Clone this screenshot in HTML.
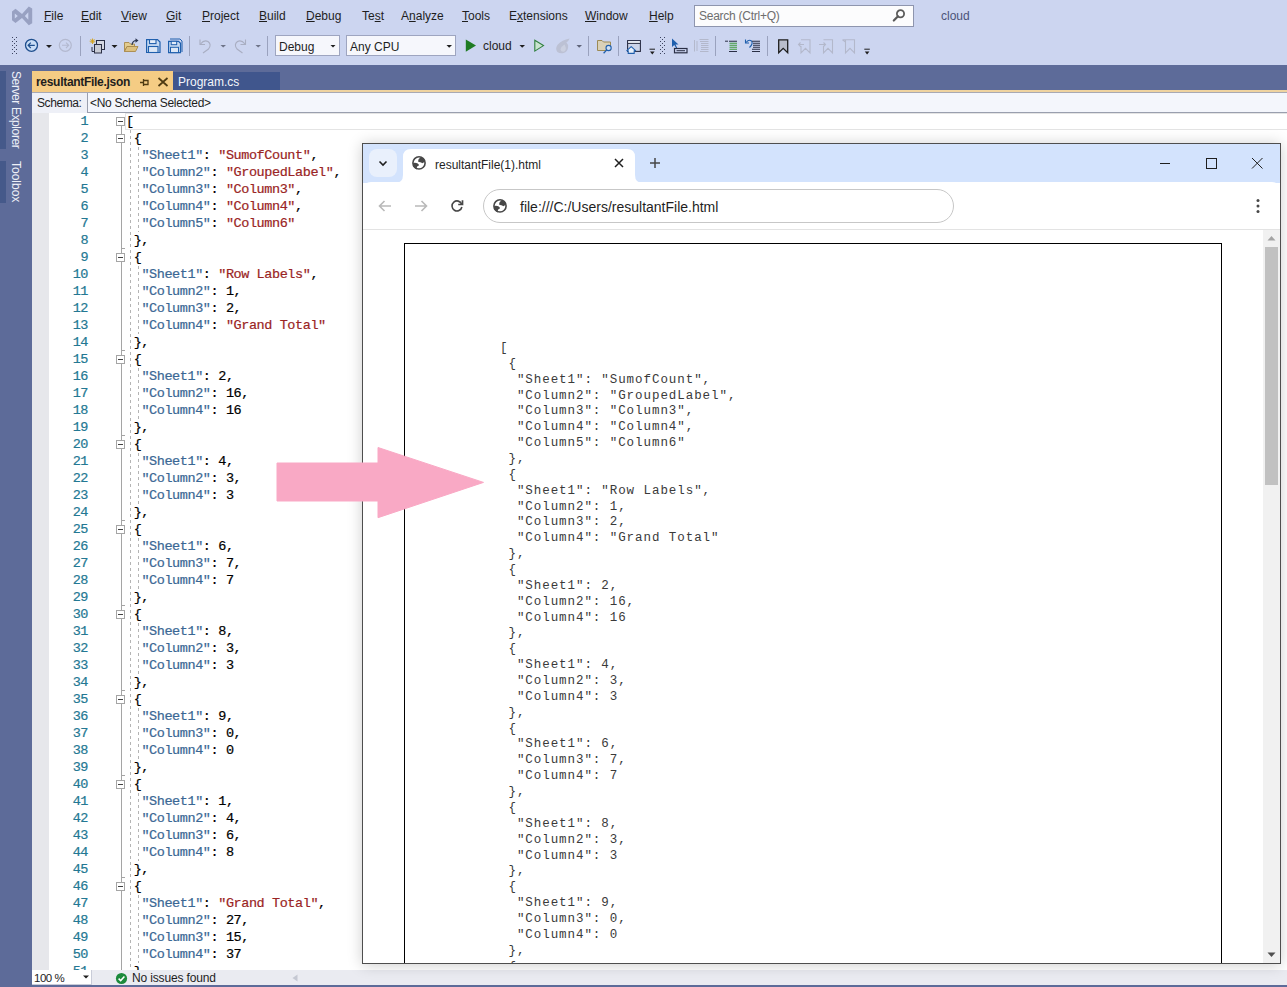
<!DOCTYPE html>
<html><head><meta charset="utf-8">
<style>
*{margin:0;padding:0;box-sizing:border-box}
html,body{width:1287px;height:987px;overflow:hidden}
body{position:relative;background:#CCD5F0;font-family:"Liberation Sans",sans-serif;font-size:12px;color:#1E1E1E}
.a{position:absolute}
/* menu */
.menu{position:absolute;top:9px;font-size:12px;color:#1E1E1E;white-space:nowrap}
.menu u{text-decoration:underline;text-underline-offset:1px}
/* env */
#env{position:absolute;left:0;top:65px;width:1287px;height:922px;background:#5D6B99}
#editor{position:absolute;left:32px;top:113px;width:1255px;height:857px;background:#fff}
.ln{position:absolute;left:48px;width:40px;text-align:right;height:17px;line-height:17px;font-family:"Liberation Mono",monospace;font-size:13.5px;color:#237893;letter-spacing:-0.48px;-webkit-text-stroke:0.2px currentColor}
.cl{position:absolute;left:126px;height:17px;line-height:17px;font-family:"Liberation Mono",monospace;font-size:13.5px;letter-spacing:-0.42px;white-space:pre;color:#000;-webkit-text-stroke:0.2px currentColor}
.k{color:#3A6794}.s{color:#9A2424}.n{color:#000}.p{color:#000}
/* browser */
#br{position:absolute;left:362px;top:143px;width:919px;height:821px;background:#fff;border:1px solid #4E4E4E;box-shadow:0 1px 14px rgba(0,0,0,0.2);overflow:hidden}
#brtabs{position:absolute;left:0;top:0;width:917px;height:39px;background:#D3E3FD}
#brpage pre{font-family:"Liberation Mono",monospace;font-size:14px;line-height:15.86px;color:#000}
</style></head>
<body>
<!-- VS logo -->
<svg class="a" style="left:0;top:0" width="40" height="30" viewBox="0 0 40 30">
 <path d="M12 11.5 L15.5 8.8 L22 14 L28.8 6.5 L32.2 8.5 V23.3 L28.8 25.3 L22 18 L15.5 23 L12 20.3 Z M14.8 13.6 L17.8 16 L14.8 18.4 Z M28.3 12.3 V19.7 L24.9 16 Z" fill="#98A1C2" fill-rule="evenodd"/>
</svg>
<div class="menu" style="left:44px"><u>F</u>ile</div>
<div class="menu" style="left:81px"><u>E</u>dit</div>
<div class="menu" style="left:121px"><u>V</u>iew</div>
<div class="menu" style="left:166px"><u>G</u>it</div>
<div class="menu" style="left:202px"><u>P</u>roject</div>
<div class="menu" style="left:259px"><u>B</u>uild</div>
<div class="menu" style="left:306px"><u>D</u>ebug</div>
<div class="menu" style="left:362px">Te<u>s</u>t</div>
<div class="menu" style="left:401px">A<u>n</u>alyze</div>
<div class="menu" style="left:462px"><u>T</u>ools</div>
<div class="menu" style="left:509px">E<u>x</u>tensions</div>
<div class="menu" style="left:585px"><u>W</u>indow</div>
<div class="menu" style="left:649px"><u>H</u>elp</div>
<div class="a" style="left:694px;top:5px;width:220px;height:22px;background:#FCFCFD;border:1px solid #8E95AE"></div>
<div class="a" style="left:699px;top:9px;font-size:12px;letter-spacing:-0.25px;color:#6E6E6E">Search (Ctrl+Q)</div>
<svg class="a" style="left:890px;top:7px" width="18" height="18" viewBox="0 0 18 18"><circle cx="10.5" cy="6.8" r="3.6" fill="none" stroke="#5A5A5A" stroke-width="1.8"/><path d="M8 9.3 L3.8 13.5" stroke="#5A5A5A" stroke-width="2.2" stroke-linecap="round"/></svg>
<div class="a" style="left:941px;top:9px;font-size:12px;color:#4B5378">cloud</div>

<!-- toolbar -->
<div id="toolbar"><!-- combos -->
<div class="a" style="left:275px;top:35px;width:65px;height:21px;background:#F6F7FC;border:1px solid #9EA5C0"></div>
<div class="a" style="left:279px;top:40px;font-size:12px;color:#1E1E1E">Debug</div>
<div class="a" style="left:346px;top:35px;width:110px;height:21px;background:#F6F7FC;border:1px solid #9EA5C0"></div>
<div class="a" style="left:350px;top:40px;font-size:12px;color:#1E1E1E">Any CPU</div>
<div class="a" style="left:483px;top:39px;font-size:12px;color:#1E1E1E">cloud</div>
<svg class="a" style="left:0;top:30px" width="900" height="30" viewBox="0 30 900 30">
<defs>
 <pattern id="grip" x="0" y="0" width="4" height="4" patternUnits="userSpaceOnUse"><rect x="0" y="1" width="1" height="1" fill="#3D4460"/><rect x="2" y="3" width="1" height="1" fill="#3D4460"/></pattern>
</defs>
<!-- grip -->
<rect x="12" y="37" width="5" height="17" fill="url(#grip)"/>
<!-- back -->
<circle cx="31.5" cy="45.3" r="6" fill="#C9DDF6" stroke="#1F4F8E" stroke-width="1.3"/>
<path d="M34.8 45.3 H28.3 M30.8 42.6 L28.1 45.3 L30.8 48" fill="none" stroke="#1F4F8E" stroke-width="1.2"/>
<path d="M46 45 H52 L49 48 Z" fill="#1E1E1E"/>
<!-- forward gray -->
<circle cx="65.3" cy="45.3" r="6" fill="none" stroke="#B3B9CF" stroke-width="1.2"/>
<path d="M62 45.3 H68.5 M66 42.6 L68.7 45.3 L66 48" fill="none" stroke="#B3B9CF" stroke-width="1.1"/>
<rect x="80" y="36" width="1" height="20" fill="#9AA2BE"/>
<!-- new project -->
<path d="M92.5 38.5 V44 M89.7 41.2 H95.3 M90.5 39.2 L94.5 43.2 M94.5 39.2 L90.5 43.2" stroke="#D4A216" stroke-width="0.9"/>
<rect x="96.5" y="40.5" width="8" height="9" fill="#D6D9E3" stroke="#2A2F45" stroke-width="1"/>
<rect x="94.5" y="44.5" width="7" height="8.5" fill="#C9CCD6" stroke="#2A2F45" stroke-width="1"/>
<path d="M92 47 V51.5 H94" fill="none" stroke="#2A2F45" stroke-width="1"/>
<path d="M111.5 45 H117.5 L114.5 48 Z" fill="#1E1E1E"/>
<!-- open folder -->
<path d="M124.5 42.5 H129 L130.5 44 H134.5 V46.5 H127 L124.5 51.5 Z" fill="#E3CC8F" stroke="#A8894A" stroke-width="0.9"/>
<path d="M124.5 51.5 L127 46.5 H138 L135.5 51.5 Z" fill="#DCC080" stroke="#A8894A" stroke-width="0.9"/>
<path d="M132 45 Q132.5 40.5 136.5 40.5" fill="none" stroke="#2B3550" stroke-width="1.2"/>
<path d="M135.5 38.3 L138.5 40.5 L135.5 42.7 Z" fill="#2B3550"/>
<!-- save -->
<path d="M146.6 39.6 H157.5 L160 42 V52.5 H146.6 Z" fill="#C7DAF2" stroke="#1F5FAD" stroke-width="1.2"/>
<rect x="149.5" y="39.6" width="6.5" height="4" fill="#E4EDF9" stroke="#1F5FAD" stroke-width="1.1"/>
<rect x="148.5" y="46.5" width="9.5" height="6" fill="#DCE7F6" stroke="#1F5FAD" stroke-width="1.1"/>
<!-- save all -->
<path d="M170 39 H180 L182 41 V52" fill="none" stroke="#1F5FAD" stroke-width="1"/>
<path d="M168.6 41.3 H178.5 L180.5 43.3 V52.6 H168.6 Z" fill="#C7DAF2" stroke="#1F5FAD" stroke-width="1.2"/>
<rect x="171.2" y="41.3" width="5.5" height="3.4" fill="#E4EDF9" stroke="#1F5FAD" stroke-width="1"/>
<rect x="170.5" y="47.3" width="8" height="5.3" fill="#DCE7F6" stroke="#1F5FAD" stroke-width="1"/>
<rect x="189" y="36" width="1" height="20" fill="#9AA2BE"/>
<!-- undo -->
<path d="M200 39.5 V44.5 H205" fill="none" stroke="#A9AEC2" stroke-width="1.1"/>
<path d="M200.5 44 Q204 39.5 208 41.5 Q212 44.5 208.5 49 L203 53" fill="none" stroke="#A9AEC2" stroke-width="1.1"/>
<path d="M220.5 45 H226 L223.2 47.6 Z" fill="#6E7488"/>
<!-- redo -->
<path d="M245.5 39.5 V44.5 H240.5" fill="none" stroke="#A9AEC2" stroke-width="1.1"/>
<path d="M245 44 Q241.5 39.5 237.5 41.5 Q233.5 44.5 237 49 L242.5 53" fill="none" stroke="#A9AEC2" stroke-width="1.1"/>
<path d="M255.5 45 H261 L258.2 47.6 Z" fill="#6E7488"/>
<rect x="267" y="36" width="1" height="20" fill="#9AA2BE"/>
<!-- combos arrows -->
<path d="M330.5 45 H335.5 L333 47.5 Z" fill="#1E1E1E"/>
<path d="M446.5 45 H452 L449.2 47.7 Z" fill="#1E1E1E"/>
<!-- play -->
<path d="M465.8 39.6 L476 45.6 L465.8 51.7 Z" fill="#1E7B22"/>
<path d="M519.5 45 H525 L522.2 47.8 Z" fill="#1E1E1E"/>
<path d="M534.8 40.2 L543.5 45.6 L534.8 51.1 Z" fill="#C9E4CF" stroke="#2F7F3E" stroke-width="1.1"/>
<!-- flame -->
<path d="M569.6 38.4 Q562 39.8 557.6 44.8 Q554.8 48.8 557.4 51.9 Q560 54 563.6 53.1 Q567.6 51.8 568.1 47.6 Q568.4 44.2 566.4 42.6 Q568.6 41 569.6 38.4 Z" fill="#BCC1D4"/>
<path d="M564.5 44.5 Q561 46.5 560.5 49.5 Q561 52 563.5 51.8 Q566 51 565.8 48 Q565.5 46 564.5 44.5 Z" fill="#CBD0E0"/>
<path d="M576.5 45 H582 L579.2 47.7 Z" fill="#5E6479"/>
<rect x="588" y="36" width="1" height="20" fill="#9AA2BE"/>
<!-- folder search -->
<path d="M597.5 40.5 H602 L603.5 42 H610.5 V50.5 H597.5 Z" fill="#D9D1B8" stroke="#9C8A55" stroke-width="1"/>
<circle cx="608.6" cy="48" r="2.6" fill="#CFE0F5" stroke="#1F5FAD" stroke-width="1.1"/>
<path d="M606.8 49.9 L603.6 53.2" stroke="#1F5FAD" stroke-width="1.3"/>
<rect x="618" y="36" width="1" height="20" fill="#9AA2BE"/>
<!-- window home -->
<rect x="627.6" y="40.6" width="12.8" height="10.8" fill="#CDD5EA" stroke="#2A2F45" stroke-width="1.1"/>
<rect x="628.2" y="41.2" width="11.6" height="2" fill="#F2F4FA"/>
<path d="M627.6 43.4 H640.4" stroke="#2A2F45" stroke-width="1"/>
<path d="M626.8 50.6 L631.2 46.6 L635.6 50.6 H634.2 V53.4 H628.2 V50.6 Z" fill="#E8F0FB" stroke="#1F5FAD" stroke-width="1.1" stroke-linejoin="round"/>
<path d="M649.5 49.2 H655" stroke="#1E1E1E" stroke-width="1"/>
<path d="M650 51.6 H654.6 L652.3 54.4 Z" fill="#1E1E1E"/>
<rect x="660" y="36.5" width="5" height="17.5" fill="url(#grip)"/>
<!-- cursor rect -->
<path d="M672 38.5 V47 L674.3 45 L676.3 48.5 L677.3 48 L675.5 44.5 H678.5 Z" fill="#1F5FAD"/>
<rect x="674.5" y="48.5" width="12.5" height="4.3" fill="none" stroke="#2A2F45" stroke-width="1.2"/>
<rect x="676.5" y="50.2" width="8.5" height="1" fill="#2A2F45"/>
<!-- gray columns -->
<path d="M694.5 40 V51.5 M697 41 V51" stroke="#B3B8CB" stroke-width="1"/>
<path d="M699.5 39.5 H708.5 M700 41.5 H708.5 M701 43.5 H708.5 M701 45.5 H708.5 M701 47.5 H708.5 M701 49.5 H708.5 M700 51.5 H708.5" stroke="#B3B8CB" stroke-width="1"/>
<rect x="715" y="36" width="1" height="20" fill="#9AA2BE"/>
<!-- indent -->
<path d="M725 41.2 H728" stroke="#2A2F45" stroke-width="1"/>
<path d="M729 41.2 H737 M729 51.5 H737" stroke="#2A2F45" stroke-width="1.1"/>
<path d="M729.5 43.3 H737 M729.5 45.3 H737 M729.5 47.3 H737 M729.5 49.3 H737" stroke="#3F9A3F" stroke-width="1.1"/>
<!-- undo lines -->
<path d="M745.5 39.5 V43 H749" fill="none" stroke="#1F5FAD" stroke-width="1.1"/>
<path d="M746 42.5 Q749 39 751.5 41 Q753.5 43.5 749.5 47.5" fill="none" stroke="#1F5FAD" stroke-width="1.1"/>
<path d="M752 41.3 H760 M753 43.3 H760 M753 45.3 H760 M753 47.3 H760 M752 49.3 H760 M752 51.5 H760" stroke="#2A2F45" stroke-width="1.1"/>
<rect x="767" y="36" width="1" height="20" fill="#9AA2BE"/>
<!-- bookmarks -->
<path d="M778.7 39.8 H787.7 V52.8 L783.2 48.3 L778.7 52.8 Z" fill="#B9BDCB" stroke="#1E1E1E" stroke-width="1.3" stroke-linejoin="miter"/>
<path d="M801 39.8 H810 V52.8 L805.5 48.3 L801 52.8 V46 M798.5 44.5 H804 M800.5 42.5 L798.5 44.5 L800.5 46.5" fill="none" stroke="#B3B8CB" stroke-width="1.1"/>
<path d="M823.5 39.8 H832.5 V52.8 L828 48.3 L823.5 52.8 V46 M819 44.5 H825.5 M823.5 42.5 L825.5 44.5 L823.5 46.5" fill="none" stroke="#B3B8CB" stroke-width="1.1"/>
<path d="M842.5 39.8 H854.5 M845.5 39.8 H854.5 V52.8 L850 48.3 L845.5 52.8 V39.8 M842.5 39.8 L845.5 42" fill="none" stroke="#B3B8CB" stroke-width="1.1"/>
<path d="M864.3 49.2 H869.8" stroke="#1E1E1E" stroke-width="1"/>
<path d="M864.8 51.6 H869.4 L867.1 54.4 Z" fill="#1E1E1E"/>
</svg>
</div>

<div id="env"></div>
<!-- left autohide -->
<div class="a" style="left:0;top:71px;width:6px;height:78px;background:#45598A"></div>
<div class="a" style="left:0;top:161px;width:6px;height:42px;background:#45598A"></div>

<!-- doc tabs -->
<div class="a" style="left:32px;top:71px;width:141px;height:22px;background:#F5CC84"></div>
<div class="a" style="left:36px;top:75px;font-weight:bold;font-size:12px;letter-spacing:-0.3px;color:#1E1E1E">resultantFile.json</div>
<svg class="a" style="left:138px;top:77px" width="12" height="11" viewBox="0 0 12 11"><path d="M2 5.5 H5.5 M5.5 2 V9 M5.5 3.5 H10 V7.5 H5.5" fill="none" stroke="#4F3A12" stroke-width="1.3"/></svg>
<svg class="a" style="left:156px;top:76px" width="14" height="12" viewBox="0 0 14 12"><path d="M2.5 2 L11.5 10 M11.5 2 L2.5 10" stroke="#4F3A12" stroke-width="1.7"/></svg>
<div class="a" style="left:173px;top:72px;width:107px;height:18px;background:#40568D"></div>
<div class="a" style="left:178px;top:75px;font-size:12px;color:#F4F6FC">Program.cs</div>
<div class="a" style="left:173px;top:90px;width:1114px;height:2px;background:#EFD3A0"></div>
<div class="a" style="left:32px;top:92px;width:1255px;height:1px;background:#A8A9B4"></div>
<!-- left sidebar text -->
<div class="a" style="left:23px;top:71px;width:80px;height:14px;transform-origin:0 0;transform:rotate(90deg);font-size:12px;color:#EEF0F8;white-space:nowrap;letter-spacing:-0.4px;line-height:14px;text-align:left">Server Explorer</div>
<div class="a" style="left:23px;top:161px;width:50px;height:14px;transform-origin:0 0;transform:rotate(90deg);font-size:12px;color:#EEF0F8;white-space:nowrap;line-height:14px;text-align:left">Toolbox</div>
<!-- schema bar -->
<div class="a" style="left:32px;top:93px;width:1255px;height:20px;background:#EEF0F7"></div>
<div class="a" style="left:37px;top:96px;font-size:12px;letter-spacing:-0.4px;color:#1E1E1E">Schema:</div>
<div class="a" style="left:87px;top:93px;width:1200px;height:20px;background:#F4F6FC;border:1px solid #9A9FAE;border-top:none;border-right:none"></div>
<div class="a" style="left:90px;top:96px;font-size:12px;letter-spacing:-0.3px;color:#1E1E1E">&lt;No Schema Selected&gt;</div>

<div id="editor"></div>
<div class="a" style="left:32px;top:113px;width:17px;height:857px;background:#E6E7EB"></div>
<div class="a" style="left:121px;top:126px;width:1px;height:844px;background:#A5A5A5"></div>
<div class="a" style="left:121px;top:248px;width:4px;height:1px;background:#A5A5A5"></div>
<div class="a" style="left:121px;top:350px;width:4px;height:1px;background:#A5A5A5"></div>
<div class="a" style="left:121px;top:435px;width:4px;height:1px;background:#A5A5A5"></div>
<div class="a" style="left:121px;top:520px;width:4px;height:1px;background:#A5A5A5"></div>
<div class="a" style="left:121px;top:605px;width:4px;height:1px;background:#A5A5A5"></div>
<div class="a" style="left:121px;top:690px;width:4px;height:1px;background:#A5A5A5"></div>
<div class="a" style="left:121px;top:775px;width:4px;height:1px;background:#A5A5A5"></div>
<div class="a" style="left:121px;top:877px;width:4px;height:1px;background:#A5A5A5"></div>
<div class="a" style="left:121px;top:979px;width:4px;height:1px;background:#A5A5A5"></div>
<div class="a" style="left:116px;top:117px;width:9px;height:9px;background:#fff;border:1px solid #A5A5A5"><div class="a" style="left:1px;top:3px;width:5px;height:1px;background:#424242"></div></div>
<div class="a" style="left:116px;top:134px;width:9px;height:9px;background:#fff;border:1px solid #A5A5A5"><div class="a" style="left:1px;top:3px;width:5px;height:1px;background:#424242"></div></div>
<div class="a" style="left:116px;top:253px;width:9px;height:9px;background:#fff;border:1px solid #A5A5A5"><div class="a" style="left:1px;top:3px;width:5px;height:1px;background:#424242"></div></div>
<div class="a" style="left:116px;top:355px;width:9px;height:9px;background:#fff;border:1px solid #A5A5A5"><div class="a" style="left:1px;top:3px;width:5px;height:1px;background:#424242"></div></div>
<div class="a" style="left:116px;top:440px;width:9px;height:9px;background:#fff;border:1px solid #A5A5A5"><div class="a" style="left:1px;top:3px;width:5px;height:1px;background:#424242"></div></div>
<div class="a" style="left:116px;top:525px;width:9px;height:9px;background:#fff;border:1px solid #A5A5A5"><div class="a" style="left:1px;top:3px;width:5px;height:1px;background:#424242"></div></div>
<div class="a" style="left:116px;top:610px;width:9px;height:9px;background:#fff;border:1px solid #A5A5A5"><div class="a" style="left:1px;top:3px;width:5px;height:1px;background:#424242"></div></div>
<div class="a" style="left:116px;top:695px;width:9px;height:9px;background:#fff;border:1px solid #A5A5A5"><div class="a" style="left:1px;top:3px;width:5px;height:1px;background:#424242"></div></div>
<div class="a" style="left:116px;top:780px;width:9px;height:9px;background:#fff;border:1px solid #A5A5A5"><div class="a" style="left:1px;top:3px;width:5px;height:1px;background:#424242"></div></div>
<div class="a" style="left:116px;top:882px;width:9px;height:9px;background:#fff;border:1px solid #A5A5A5"><div class="a" style="left:1px;top:3px;width:5px;height:1px;background:#424242"></div></div>
<div class="a" style="left:130px;top:130px;width:1px;height:840px;background:repeating-linear-gradient(#B4B4B4 0 3px,transparent 3px 6px)"></div>
<div class="a" style="left:138px;top:147px;width:1px;height:85px;background:repeating-linear-gradient(#B4B4B4 0 3px,transparent 3px 6px)"></div>
<div class="a" style="left:138px;top:266px;width:1px;height:68px;background:repeating-linear-gradient(#B4B4B4 0 3px,transparent 3px 6px)"></div>
<div class="a" style="left:138px;top:368px;width:1px;height:51px;background:repeating-linear-gradient(#B4B4B4 0 3px,transparent 3px 6px)"></div>
<div class="a" style="left:138px;top:453px;width:1px;height:51px;background:repeating-linear-gradient(#B4B4B4 0 3px,transparent 3px 6px)"></div>
<div class="a" style="left:138px;top:538px;width:1px;height:51px;background:repeating-linear-gradient(#B4B4B4 0 3px,transparent 3px 6px)"></div>
<div class="a" style="left:138px;top:623px;width:1px;height:51px;background:repeating-linear-gradient(#B4B4B4 0 3px,transparent 3px 6px)"></div>
<div class="a" style="left:138px;top:708px;width:1px;height:51px;background:repeating-linear-gradient(#B4B4B4 0 3px,transparent 3px 6px)"></div>
<div class="a" style="left:138px;top:793px;width:1px;height:68px;background:repeating-linear-gradient(#B4B4B4 0 3px,transparent 3px 6px)"></div>
<div class="a" style="left:138px;top:895px;width:1px;height:68px;background:repeating-linear-gradient(#B4B4B4 0 3px,transparent 3px 6px)"></div>
<div class="a" style="left:125px;top:113px;width:1162px;height:17px;border:1px solid #E4E4E4;border-right:none"></div>
<div class="ln" style="top:113px">1</div>
<div class="cl" style="top:113px"><span class="p">[</span></div>
<div class="ln" style="top:130px">2</div>
<div class="cl" style="top:130px">&nbsp;<span class="p">{</span></div>
<div class="ln" style="top:147px">3</div>
<div class="cl" style="top:147px">&nbsp;&nbsp;<span class="k">&quot;Sheet1&quot;</span><span class="p">:</span> <span class="s">&quot;SumofCount&quot;</span><span class="p">,</span></div>
<div class="ln" style="top:164px">4</div>
<div class="cl" style="top:164px">&nbsp;&nbsp;<span class="k">&quot;Column2&quot;</span><span class="p">:</span> <span class="s">&quot;GroupedLabel&quot;</span><span class="p">,</span></div>
<div class="ln" style="top:181px">5</div>
<div class="cl" style="top:181px">&nbsp;&nbsp;<span class="k">&quot;Column3&quot;</span><span class="p">:</span> <span class="s">&quot;Column3&quot;</span><span class="p">,</span></div>
<div class="ln" style="top:198px">6</div>
<div class="cl" style="top:198px">&nbsp;&nbsp;<span class="k">&quot;Column4&quot;</span><span class="p">:</span> <span class="s">&quot;Column4&quot;</span><span class="p">,</span></div>
<div class="ln" style="top:215px">7</div>
<div class="cl" style="top:215px">&nbsp;&nbsp;<span class="k">&quot;Column5&quot;</span><span class="p">:</span> <span class="s">&quot;Column6&quot;</span><span class="p"></span></div>
<div class="ln" style="top:232px">8</div>
<div class="cl" style="top:232px">&nbsp;<span class="p">},</span></div>
<div class="ln" style="top:249px">9</div>
<div class="cl" style="top:249px">&nbsp;<span class="p">{</span></div>
<div class="ln" style="top:266px">10</div>
<div class="cl" style="top:266px">&nbsp;&nbsp;<span class="k">&quot;Sheet1&quot;</span><span class="p">:</span> <span class="s">&quot;Row Labels&quot;</span><span class="p">,</span></div>
<div class="ln" style="top:283px">11</div>
<div class="cl" style="top:283px">&nbsp;&nbsp;<span class="k">&quot;Column2&quot;</span><span class="p">:</span> <span class="n">1,</span></div>
<div class="ln" style="top:300px">12</div>
<div class="cl" style="top:300px">&nbsp;&nbsp;<span class="k">&quot;Column3&quot;</span><span class="p">:</span> <span class="n">2,</span></div>
<div class="ln" style="top:317px">13</div>
<div class="cl" style="top:317px">&nbsp;&nbsp;<span class="k">&quot;Column4&quot;</span><span class="p">:</span> <span class="s">&quot;Grand Total&quot;</span><span class="p"></span></div>
<div class="ln" style="top:334px">14</div>
<div class="cl" style="top:334px">&nbsp;<span class="p">},</span></div>
<div class="ln" style="top:351px">15</div>
<div class="cl" style="top:351px">&nbsp;<span class="p">{</span></div>
<div class="ln" style="top:368px">16</div>
<div class="cl" style="top:368px">&nbsp;&nbsp;<span class="k">&quot;Sheet1&quot;</span><span class="p">:</span> <span class="n">2,</span></div>
<div class="ln" style="top:385px">17</div>
<div class="cl" style="top:385px">&nbsp;&nbsp;<span class="k">&quot;Column2&quot;</span><span class="p">:</span> <span class="n">16,</span></div>
<div class="ln" style="top:402px">18</div>
<div class="cl" style="top:402px">&nbsp;&nbsp;<span class="k">&quot;Column4&quot;</span><span class="p">:</span> <span class="n">16</span></div>
<div class="ln" style="top:419px">19</div>
<div class="cl" style="top:419px">&nbsp;<span class="p">},</span></div>
<div class="ln" style="top:436px">20</div>
<div class="cl" style="top:436px">&nbsp;<span class="p">{</span></div>
<div class="ln" style="top:453px">21</div>
<div class="cl" style="top:453px">&nbsp;&nbsp;<span class="k">&quot;Sheet1&quot;</span><span class="p">:</span> <span class="n">4,</span></div>
<div class="ln" style="top:470px">22</div>
<div class="cl" style="top:470px">&nbsp;&nbsp;<span class="k">&quot;Column2&quot;</span><span class="p">:</span> <span class="n">3,</span></div>
<div class="ln" style="top:487px">23</div>
<div class="cl" style="top:487px">&nbsp;&nbsp;<span class="k">&quot;Column4&quot;</span><span class="p">:</span> <span class="n">3</span></div>
<div class="ln" style="top:504px">24</div>
<div class="cl" style="top:504px">&nbsp;<span class="p">},</span></div>
<div class="ln" style="top:521px">25</div>
<div class="cl" style="top:521px">&nbsp;<span class="p">{</span></div>
<div class="ln" style="top:538px">26</div>
<div class="cl" style="top:538px">&nbsp;&nbsp;<span class="k">&quot;Sheet1&quot;</span><span class="p">:</span> <span class="n">6,</span></div>
<div class="ln" style="top:555px">27</div>
<div class="cl" style="top:555px">&nbsp;&nbsp;<span class="k">&quot;Column3&quot;</span><span class="p">:</span> <span class="n">7,</span></div>
<div class="ln" style="top:572px">28</div>
<div class="cl" style="top:572px">&nbsp;&nbsp;<span class="k">&quot;Column4&quot;</span><span class="p">:</span> <span class="n">7</span></div>
<div class="ln" style="top:589px">29</div>
<div class="cl" style="top:589px">&nbsp;<span class="p">},</span></div>
<div class="ln" style="top:606px">30</div>
<div class="cl" style="top:606px">&nbsp;<span class="p">{</span></div>
<div class="ln" style="top:623px">31</div>
<div class="cl" style="top:623px">&nbsp;&nbsp;<span class="k">&quot;Sheet1&quot;</span><span class="p">:</span> <span class="n">8,</span></div>
<div class="ln" style="top:640px">32</div>
<div class="cl" style="top:640px">&nbsp;&nbsp;<span class="k">&quot;Column2&quot;</span><span class="p">:</span> <span class="n">3,</span></div>
<div class="ln" style="top:657px">33</div>
<div class="cl" style="top:657px">&nbsp;&nbsp;<span class="k">&quot;Column4&quot;</span><span class="p">:</span> <span class="n">3</span></div>
<div class="ln" style="top:674px">34</div>
<div class="cl" style="top:674px">&nbsp;<span class="p">},</span></div>
<div class="ln" style="top:691px">35</div>
<div class="cl" style="top:691px">&nbsp;<span class="p">{</span></div>
<div class="ln" style="top:708px">36</div>
<div class="cl" style="top:708px">&nbsp;&nbsp;<span class="k">&quot;Sheet1&quot;</span><span class="p">:</span> <span class="n">9,</span></div>
<div class="ln" style="top:725px">37</div>
<div class="cl" style="top:725px">&nbsp;&nbsp;<span class="k">&quot;Column3&quot;</span><span class="p">:</span> <span class="n">0,</span></div>
<div class="ln" style="top:742px">38</div>
<div class="cl" style="top:742px">&nbsp;&nbsp;<span class="k">&quot;Column4&quot;</span><span class="p">:</span> <span class="n">0</span></div>
<div class="ln" style="top:759px">39</div>
<div class="cl" style="top:759px">&nbsp;<span class="p">},</span></div>
<div class="ln" style="top:776px">40</div>
<div class="cl" style="top:776px">&nbsp;<span class="p">{</span></div>
<div class="ln" style="top:793px">41</div>
<div class="cl" style="top:793px">&nbsp;&nbsp;<span class="k">&quot;Sheet1&quot;</span><span class="p">:</span> <span class="n">1,</span></div>
<div class="ln" style="top:810px">42</div>
<div class="cl" style="top:810px">&nbsp;&nbsp;<span class="k">&quot;Column2&quot;</span><span class="p">:</span> <span class="n">4,</span></div>
<div class="ln" style="top:827px">43</div>
<div class="cl" style="top:827px">&nbsp;&nbsp;<span class="k">&quot;Column3&quot;</span><span class="p">:</span> <span class="n">6,</span></div>
<div class="ln" style="top:844px">44</div>
<div class="cl" style="top:844px">&nbsp;&nbsp;<span class="k">&quot;Column4&quot;</span><span class="p">:</span> <span class="n">8</span></div>
<div class="ln" style="top:861px">45</div>
<div class="cl" style="top:861px">&nbsp;<span class="p">},</span></div>
<div class="ln" style="top:878px">46</div>
<div class="cl" style="top:878px">&nbsp;<span class="p">{</span></div>
<div class="ln" style="top:895px">47</div>
<div class="cl" style="top:895px">&nbsp;&nbsp;<span class="k">&quot;Sheet1&quot;</span><span class="p">:</span> <span class="s">&quot;Grand Total&quot;</span><span class="p">,</span></div>
<div class="ln" style="top:912px">48</div>
<div class="cl" style="top:912px">&nbsp;&nbsp;<span class="k">&quot;Column2&quot;</span><span class="p">:</span> <span class="n">27,</span></div>
<div class="ln" style="top:929px">49</div>
<div class="cl" style="top:929px">&nbsp;&nbsp;<span class="k">&quot;Column3&quot;</span><span class="p">:</span> <span class="n">15,</span></div>
<div class="ln" style="top:946px">50</div>
<div class="cl" style="top:946px">&nbsp;&nbsp;<span class="k">&quot;Column4&quot;</span><span class="p">:</span> <span class="n">37</span></div>
<div class="ln" style="top:963px">51</div>
<div class="cl" style="top:963px">&nbsp;<span class="p">}</span></div>

<!-- status -->
<div class="a" style="left:32px;top:970px;width:1255px;height:15px;background:#EAEBF1"></div>
<div class="a" style="left:32px;top:970px;width:60px;height:15px;background:#fff;border:1px solid #C9CCD8;border-top:none;border-left:none"></div>
<div class="a" style="left:34px;top:971px;font-size:11.5px;line-height:15px;letter-spacing:-0.5px;color:#1E1E1E">100 %</div>
<svg class="a" style="left:82px;top:974px" width="8" height="6"><path d="M1 1.5 H7 L4 4.5 Z" fill="#1E1E1E"/></svg>
<svg class="a" style="left:115px;top:972px" width="13" height="13" viewBox="0 0 13 13"><circle cx="6.5" cy="6.5" r="5.6" fill="#1C8A3C"/><path d="M3.6 6.6 L5.7 8.6 L9.4 4.6" fill="none" stroke="#fff" stroke-width="1.5"/></svg>
<div class="a" style="left:132px;top:971px;font-size:12px;line-height:15px;letter-spacing:-0.15px;color:#1E1E1E">No issues found</div>
<svg class="a" style="left:290px;top:973px" width="10" height="10"><path d="M7.5 1.5 V8.5 L2.5 5 Z" fill="#C5C8D2"/></svg>

<!-- browser -->
<div id="br">
 <div id="brtabs"></div>
 <div class="a" style="left:6px;top:5px;width:28px;height:28px;border-radius:8px;background:#E9F0FC"></div>
 <svg class="a" style="left:14px;top:13px" width="12" height="12" viewBox="0 0 12 12"><path d="M2.5 4.5 L6 8 L9.5 4.5" fill="none" stroke="#1F1F1F" stroke-width="1.6"/></svg>
 <!-- active tab -->
 <svg class="a" style="left:32px;top:5px" width="249" height="34" viewBox="0 0 249 34"><path d="M0 34 Q8 34 8 26 V8 Q8 0 16 0 H232 Q240 0 240 8 V26 Q240 34 248 34 Z" fill="#fff"/></svg>
 <svg class="a" style="left:48px;top:11px" width="16" height="16" viewBox="0 0 16 16"><circle cx="8" cy="7.9" r="6.1" fill="none" stroke="#474747" stroke-width="1.6"/><path d="M7 6.6 Q7.2 3.8 9.4 2.6 Q12.5 2.7 14.2 5.6 Q13.5 7.8 11.2 8.2 Q10 7 9 7.2 Z" fill="#474747"/><path d="M2.2 8 Q4.5 7.6 6.3 8.2 Q8.5 9.5 7.9 10.4 Q6 11 5.8 12.5 L5.6 14.4 Q3 13.4 2 11 Z" fill="#474747"/></svg>
 <div class="a" style="left:72px;top:13.5px;font-size:12px;color:#1F1F1F;white-space:nowrap">resultantFile(1).html</div>
 <svg class="a" style="left:250px;top:13px" width="12" height="12" viewBox="0 0 12 12"><path d="M2 2 L10 10 M10 2 L2 10" stroke="#1F1F1F" stroke-width="1.5"/></svg>
 <svg class="a" style="left:285px;top:12px" width="14" height="14" viewBox="0 0 14 14"><path d="M7 2 V12 M2 7 H12" stroke="#474747" stroke-width="1.5"/></svg>
 <!-- window controls -->
 <svg class="a" style="left:792px;top:14px" width="20" height="10"><path d="M5 5.5 H15" stroke="#1F1F1F" stroke-width="1"/></svg>
 <svg class="a" style="left:838px;top:10px" width="20" height="20"><rect x="5.5" y="4.5" width="10" height="10" fill="none" stroke="#1F1F1F" stroke-width="1"/></svg>
 <svg class="a" style="left:884px;top:10px" width="20" height="20"><path d="M5 4 L15.5 14.5 M15.5 4 L5 14.5" stroke="#1F1F1F" stroke-width="1"/></svg>
 <!-- toolbar -->
 <div class="a" style="left:0;top:38px;width:917px;height:48px;background:#fff;border-radius:8px 8px 0 0;border-bottom:1px solid #E3E3E3"></div>
 <svg class="a" style="left:13px;top:53px" width="18" height="18" viewBox="0 0 18 18"><path d="M15 9 H3.5 M8.5 4 L3.5 9 L8.5 14" fill="none" stroke="#B9B9B9" stroke-width="1.6"/></svg>
 <svg class="a" style="left:49px;top:53px" width="18" height="18" viewBox="0 0 18 18"><path d="M3 9 H14.5 M9.5 4 L14.5 9 L9.5 14" fill="none" stroke="#B9B9B9" stroke-width="1.6"/></svg>
 <svg class="a" style="left:85px;top:53px" width="18" height="18" viewBox="0 0 18 18"><path d="M13.9 10 A5 5 0 1 1 13.7 7.2" fill="none" stroke="#474747" stroke-width="1.6"/><path d="M14.5 3.2 V7.5 H10.2" fill="none" stroke="#474747" stroke-width="1.7"/></svg>
 <div class="a" style="left:120px;top:45px;width:471px;height:34px;border:1px solid #C7C7C7;border-radius:17px;background:#fff"></div>
 <svg class="a" style="left:129px;top:54px" width="16" height="16" viewBox="0 0 16 16"><circle cx="8" cy="7.9" r="6.1" fill="none" stroke="#474747" stroke-width="1.6"/><path d="M7 6.6 Q7.2 3.8 9.4 2.6 Q12.5 2.7 14.2 5.6 Q13.5 7.8 11.2 8.2 Q10 7 9 7.2 Z" fill="#474747"/><path d="M2.2 8 Q4.5 7.6 6.3 8.2 Q8.5 9.5 7.9 10.4 Q6 11 5.8 12.5 L5.6 14.4 Q3 13.4 2 11 Z" fill="#474747"/></svg>
 <div class="a" style="left:157px;top:55px;font-size:14px;color:#1F1F1F;white-space:nowrap">file:///C:/Users/resultantFile.html</div>
 <svg class="a" style="left:889px;top:54px" width="12" height="16"><circle cx="6" cy="2.5" r="1.5" fill="#474747"/><circle cx="6" cy="8" r="1.5" fill="#474747"/><circle cx="6" cy="13.5" r="1.5" fill="#474747"/></svg>
 <!-- page -->
 <div class="a" style="left:0;top:86px;width:917px;height:733px;background:#fff;overflow:hidden">
  <div class="a" style="left:41px;top:13px;width:818px;height:760px;border:1px solid #000">
   <pre class="a" style="left:95px;top:97px;font-family:'Liberation Mono',monospace;font-size:12.5px;letter-spacing:0.94px;line-height:15.86px;color:#3a3a3a">[
 {
  &quot;Sheet1&quot;: &quot;SumofCount&quot;,
  &quot;Column2&quot;: &quot;GroupedLabel&quot;,
  &quot;Column3&quot;: &quot;Column3&quot;,
  &quot;Column4&quot;: &quot;Column4&quot;,
  &quot;Column5&quot;: &quot;Column6&quot;
 },
 {
  &quot;Sheet1&quot;: &quot;Row Labels&quot;,
  &quot;Column2&quot;: 1,
  &quot;Column3&quot;: 2,
  &quot;Column4&quot;: &quot;Grand Total&quot;
 },
 {
  &quot;Sheet1&quot;: 2,
  &quot;Column2&quot;: 16,
  &quot;Column4&quot;: 16
 },
 {
  &quot;Sheet1&quot;: 4,
  &quot;Column2&quot;: 3,
  &quot;Column4&quot;: 3
 },
 {
  &quot;Sheet1&quot;: 6,
  &quot;Column3&quot;: 7,
  &quot;Column4&quot;: 7
 },
 {
  &quot;Sheet1&quot;: 8,
  &quot;Column2&quot;: 3,
  &quot;Column4&quot;: 3
 },
 {
  &quot;Sheet1&quot;: 9,
  &quot;Column3&quot;: 0,
  &quot;Column4&quot;: 0
 },
 {</pre>
  </div>
  <div class="a" style="left:900px;top:0;width:17px;height:733px;background:#F1F1F1"></div>
  <div class="a" style="left:902px;top:17px;width:13px;height:238px;background:#C1C1C1"></div>
  <svg class="a" style="left:900px;top:0" width="17" height="17"><path d="M4.5 10.5 L8.5 6 L12.5 10.5 Z" fill="#A3A3A3"/></svg>
  <svg class="a" style="left:900px;top:716px" width="17" height="17"><path d="M4.5 6.5 L8.5 11 L12.5 6.5 Z" fill="#505050"/></svg>
 </div>
</div>

<!-- pink arrow -->
<svg class="a" style="left:0;top:0" width="1287" height="987"><path d="M277 463 H378 V447.5 L483.5 482.4 L378 517.7 V501 H277 Z" fill="#F9A9C5" stroke="#F9A9C5" stroke-width="1" stroke-linejoin="round"/></svg>

</body></html>
